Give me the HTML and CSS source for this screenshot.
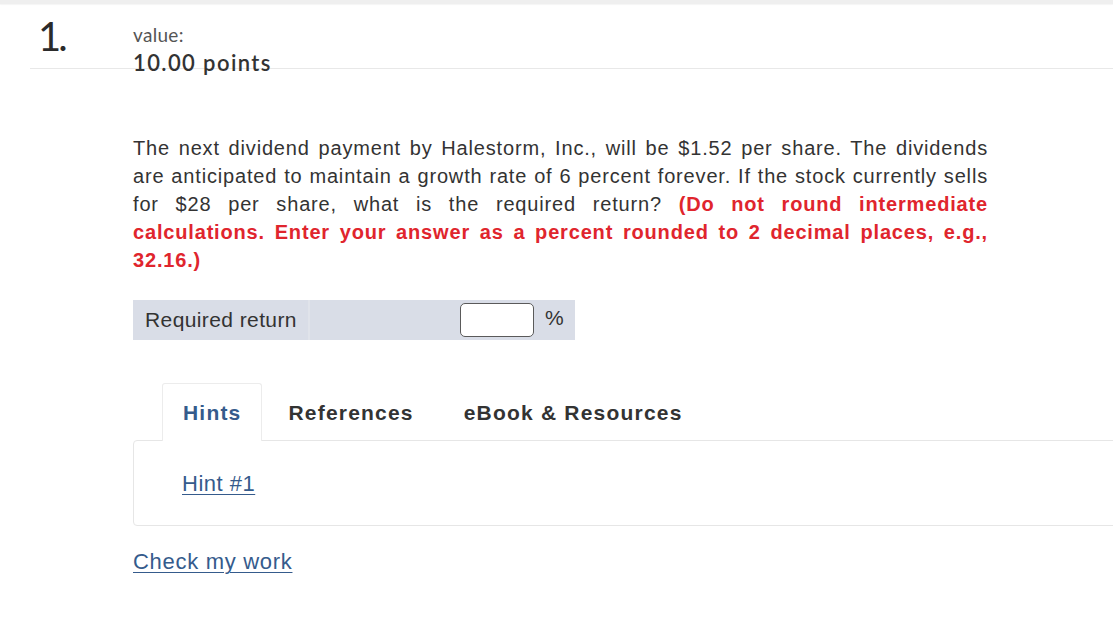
FILE: index.html
```html
<!DOCTYPE html>
<html lang="en">
<head>
<meta charset="utf-8">
<title>Question 1</title>
<link rel="stylesheet" href="styles.css">
</head>
<body>
<div class="topbar"></div>
<header class="qhead">
  <div class="qnum">1.</div>
  <div class="qmeta">
    <div class="qvalue">value:</div>
    <div class="qpoints">10.00 points</div>
  </div>
</header>
<main class="qbody">
  <p class="qtext">The next dividend payment by Halestorm, Inc., will be $1.52 per share. The dividends are anticipated to maintain a growth rate of 6 percent forever. If the stock currently sells for $28 per share, what is the required return? <strong class="warn">(Do not round intermediate calculations. Enter your answer as a percent rounded to 2 decimal places, e.g., 32.16.)</strong></p>

  <div class="answer">
    <div class="cell label">Required return</div>
    <div class="cell field"><span class="input"></span></div>
    <div class="cell unit">%</div>
  </div>

  <nav class="tabs">
    <span class="tab active">Hints</span>
    <span class="tab">References</span>
    <span class="tab">eBook &amp; Resources</span>
  </nav>
  <section class="panel">
    <a class="link hint" href="#">Hint #1</a>
  </section>

  <a class="link check" href="#">Check my work</a>
</main>
</body>
</html>
```
FILE: styles.css
```css
html, body {
  margin: 0;
  padding: 0;
  background: #fff;
  overflow: hidden;
}
body {
  width: 1113px;
  height: 627px;
  font-family: "Liberation Sans", Arial, sans-serif;
  color: #333;
}
.topbar {
  height: 4px;
  background: #efefef;
  box-shadow: 0 1px 1px rgba(0,0,0,0.04);
}
.qhead {
  margin-left: 30px;
  height: 64px;
  border-bottom: 1px solid #e8e8e8;
  display: flex;
  font-family: Lato, "Open Sans", sans-serif;
}
.qnum {
  width: 95px;
  padding-left: 8px;
  padding-top: 12px;
  font-size: 40px;
  line-height: 40px;
  font-weight: 400;
  letter-spacing: -3px;
  color: #2b2b2b;
}
.qmeta {
  padding-top: 19px;
}
.qvalue {
  font-size: 19px;
  line-height: 23px;
  color: #555;
  letter-spacing: 0.3px;
}
.qpoints {
  margin-top: 4px;
  font-size: 22px;
  line-height: 26px;
  font-weight: 600;
  letter-spacing: 1.4px;
  color: #333;
}
.qbody {
  padding-left: 133px;
}
.qtext {
  margin: 65px 0 0 0;
  width: 855px;
  font-size: 20px;
  line-height: 28px;
  text-align: justify;
  letter-spacing: 0.83px;
  color: #333;
}
.warn {
  color: #e0252d;
  font-weight: bold;
}
.answer {
  margin-top: 26px;
  width: 442px;
  height: 40px;
  background: #d9dde7;
  display: flex;
  align-items: center;
}
.cell {
  height: 40px;
  display: flex;
  align-items: center;
  box-sizing: border-box;
}
.label {
  width: 177px;
  padding-left: 12px;
  font-size: 21px;
  letter-spacing: 0.4px;
  color: #333;
  border-right: 2px solid #e0e3ea;
}
.field {
  width: 224px;
  justify-content: flex-end;
}
.input {
  display: block;
  width: 74px;
  height: 34px;
  box-sizing: border-box;
  border: 1px solid #5a5a5a;
  border-radius: 5px;
  background: #fff;
}
.unit {
  padding-left: 11px;
  font-size: 21px;
  color: #333;
  align-items: flex-start;
  padding-top: 6px;
}
.tabs {
  margin-top: 43px;
  margin-left: 29px;
  display: flex;
  height: 57px;
  position: relative;
  z-index: 1;
}
.tab {
  box-sizing: border-box;
  height: 58px;
  padding: 0 19px 0 20px;
  display: flex;
  align-items: center;
  font-size: 21px;
  font-weight: bold;
  letter-spacing: 1.2px;
  color: #333;
  border: 1px solid transparent;
  border-bottom: none;
  border-radius: 3px 3px 0 0;
}
.tab + .tab {
  padding: 0 22px 0 26px;
}
.tab.active {
  color: #355b8c;
  background: #fff;
  border-color: #ececec;
}
.panel {
  box-sizing: border-box;
  width: 1000px;
  height: 86px;
  border: 1px solid #e6e6e6;
  border-radius: 4px;
  padding: 30px 0 0 48px;
}
.link {
  color: #355b8c;
  text-decoration: underline;
  text-underline-offset: 3px;
  text-decoration-thickness: 1px;
  font-size: 22px;
  letter-spacing: 0.5px;
}
.hint {
  display: inline-block;
  line-height: 26px;
}
.check {
  display: inline-block;
  margin-top: 23px;
  line-height: 26px;
  letter-spacing: 0.7px;
}
```
